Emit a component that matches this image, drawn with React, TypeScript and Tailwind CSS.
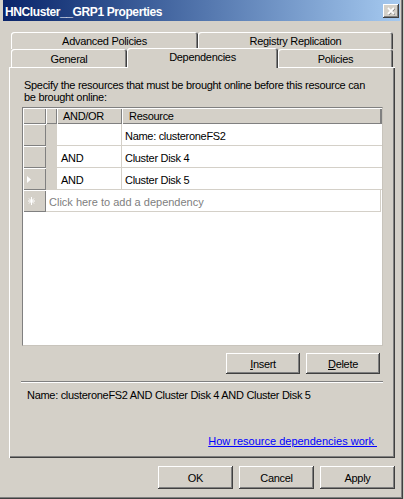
import React from "react";

function Tab({ className, children }: { className: string; children: React.ReactNode }) {
  return (
    <div
      className={
        "rounded-t-[3px] bg-[#d4d0c8] shadow-[inset_1px_1px_#ffffff,inset_-1px_0_#404040,inset_-2px_0_#808080] text-center text-[11px] leading-[12px] tracking-[-0.3px] " +
        className
      }
    >
      {children}
    </div>
  );
}

function Btn({ className, children }: { className: string; children: React.ReactNode }) {
  return (
    <div
      className={
        "bg-[#d4d0c8] shadow-[inset_-1px_-1px_#404040,inset_1px_1px_#ffffff,inset_-2px_-2px_#808080] flex items-center justify-center text-[11px] leading-[12px] tracking-[-0.3px] " +
        className
      }
    >
      {children}
    </div>
  );
}

function RowHeader({ children }: { children?: React.ReactNode }) {
  return (
    <div className="w-[23px] h-[22px] shrink-0 bg-[#d4d0c8] shadow-[inset_1px_1px_#ffffff,inset_-1px_-1px_#808080]">
      {children}
    </div>
  );
}

function DataRow({ op, res, current }: { op: string; res: string; current?: boolean }) {
  return (
    <div className="flex h-[22px]">
      <RowHeader>
        {current ? (
          <svg width="5" height="8" viewBox="0 0 5 8" className="ml-[4px] mt-[8px]">
            <polygon points="0,0 4,3.5 0,7" fill="#ffffff" />
          </svg>
        ) : null}
      </RowHeader>
      <div className="w-[11px] h-[22px] shrink-0 bg-[#d4d0c8]" />
      <div className="w-[65px] h-[22px] shrink-0 bg-white border-b border-r border-[#d4d0c8] pl-[4px] pt-[6px] text-[11px] leading-[12px] tracking-[-0.3px]">
        {op}
      </div>
      <div className="flex-1 h-[22px] bg-white border-b border-[#d4d0c8] pl-[3px] pt-[6px] text-[11px] leading-[12px] tracking-[-0.3px]">
        {res}
      </div>
    </div>
  );
}

export default function App() {
  return (
    <div className="w-[404px] h-[499px] bg-[#d4d0c8] font-['Liberation_Sans',Arial,sans-serif] text-black overflow-hidden">
      <div className="w-[403px] h-[499px] flex flex-col shadow-[inset_-1px_-1px_#404040,inset_-2px_-2px_#808080]">
        {/* Title bar */}
        <div className="ml-[3px] mr-[3px] h-[21px] shrink-0 flex items-center justify-between pl-[2px] pr-[1px] bg-linear-to-r from-[#0a246a] to-[#a6caf0]">
          <span className="mt-[3px] text-white font-bold text-[12px] leading-[14px] tracking-[-0.4px]">
            HNCluster__GRP1 Properties
          </span>
          <div className="mt-[1px] w-[16px] h-[14px] bg-[#d4d0c8] shadow-[inset_-1px_-1px_#404040,inset_1px_1px_#ffffff,inset_-2px_-2px_#808080] flex items-center justify-center">
            <svg width="16" height="14" viewBox="0 0 16 14">
              <path d="M5 4 L11 10 M11 4 L5 10" stroke="#808080" strokeWidth="1.8" transform="translate(0.6,0.6)" />
              <path d="M5 4 L11 10 M11 4 L5 10" stroke="#ffffff" strokeWidth="1.8" />
            </svg>
          </div>
        </div>

        {/* Tabs */}
        <div className="ml-[11px] mt-[11px] w-[382px] shrink-0">
          <div className="flex h-[17px]">
            <Tab className="w-[187px] h-[17px] pt-[3px]">Advanced Policies</Tab>
            <Tab className="w-[195px] h-[17px] pt-[3px]">Registry Replication</Tab>
          </div>
          <div className="flex h-[18px] items-end">
            <Tab className="w-[116px] h-[18px] pt-[4px]">General</Tab>
            <Tab className="relative z-10 w-[151px] h-[20px] -mb-[1px] pt-[3px]">Dependencies</Tab>
            <Tab className="w-[115px] h-[18px] pt-[4px]">Policies</Tab>
          </div>
        </div>

        {/* Panel */}
        <div className="ml-[9px] w-[386px] h-[391px] shrink-0 shadow-[inset_1px_1px_#ffffff,inset_-1px_-1px_#404040,inset_-2px_-2px_#808080] pt-[12px] pl-[13px] flex flex-col">
          <p className="pl-[2px] text-[11px] leading-[12px] tracking-[-0.3px] w-[350px]">
            Specify the resources that must be brought online before this resource can be brought online:
          </p>

          {/* Grid */}
          <div className="mt-[4px] w-[361px] h-[239px] shrink-0 bg-white border-t border-l border-t-[#808080] border-l-[#808080] border-r border-b border-r-[#c8c4bc] border-b-[#c8c4bc] flex flex-col">
            <div className="flex h-[16px] shrink-0">
              <div className="w-[23px] h-[16px] bg-[#d4d0c8] shadow-[inset_1px_1px_#ffffff,inset_-1px_-1px_#808080]" />
              <div className="w-[11px] h-[16px] bg-[#d4d0c8] shadow-[inset_1px_1px_#ffffff,inset_-1px_-1px_#808080]" />
              <div className="w-[65px] h-[16px] bg-[#d4d0c8] shadow-[inset_1px_1px_#ffffff,inset_-1px_-1px_#808080] pl-[6px] pt-[2px] text-[11px] leading-[12px] tracking-[-0.3px]">
                AND/OR
              </div>
              <div className="flex-1 h-[16px] bg-[#d4d0c8] shadow-[inset_1px_1px_#ffffff,inset_-1px_-1px_#808080,inset_-2px_0_#808080] pl-[7px] pt-[2px] text-[11px] leading-[12px] tracking-[-0.3px]">
                Resource
              </div>
            </div>
            <DataRow op="" res="Name: clusteroneFS2" />
            <DataRow op="AND" res="Cluster Disk 4" />
            <DataRow op="AND" res="Cluster Disk 5" current />
            <div className="flex h-[22px]">
              <RowHeader>
                <svg width="8" height="9" viewBox="0 0 8 9" className="ml-[5px] mt-[7px]">
                  <path d="M3.5 0 V8 M0 4 H7 M1 1.5 L6 6.5 M6 1.5 L1 6.5" stroke="#ffffff" strokeWidth="1" />
                </svg>
              </RowHeader>
              <div className="flex-1 mr-[1px] h-[22px] bg-white border-b border-r border-[#d4d0c8] pl-[3px] pt-[6px] text-[11px] leading-[12px] text-[#808080]">
                Click here to add a dependency
              </div>
            </div>
          </div>

          {/* Insert / Delete */}
          <div className="mt-[7px] w-[361px] flex justify-end gap-[6px] pr-[3px]">
            <Btn className="w-[74px] h-[21px]">
              <span>
                <span className="underline">I</span>nsert
              </span>
            </Btn>
            <Btn className="w-[74px] h-[21px]">
              <span>
                <span className="underline">D</span>elete
              </span>
            </Btn>
          </div>

          {/* Separator */}
          <div className="mt-[7px] -ml-[1px] w-[362px] h-[2px] border-t border-t-[#808080] border-b border-b-[#ffffff]" />

          <p className="mt-[6px] pl-[5px] text-[11px] leading-[12px] tracking-[-0.3px]">
            Name: clusteroneFS2 AND Cluster Disk 4 AND Cluster Disk 5
          </p>

          <div className="mt-[34px] w-[361px] flex justify-end pr-[6px]">
            <span className="whitespace-pre text-[11px] leading-[12px] text-[#0000ff] underline">
              {"How resource dependencies work "}
            </span>
          </div>
        </div>

        {/* Bottom buttons */}
        <div className="ml-[9px] w-[386px] mt-[8px] flex justify-end gap-[6px]">
          <Btn className="w-[75px] h-[23px]">OK</Btn>
          <Btn className="w-[75px] h-[23px]">Cancel</Btn>
          <Btn className="w-[75px] h-[23px]">Apply</Btn>
        </div>
      </div>
    </div>
  );
}
